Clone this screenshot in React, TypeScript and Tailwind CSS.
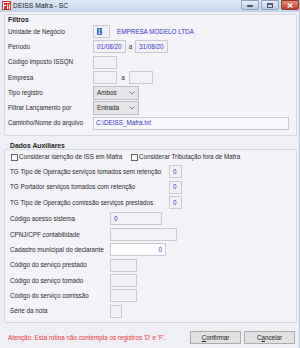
import React from "react";

const font = { fontFamily: '"Liberation Sans", Arial, sans-serif' };

const Box = ({ w, children, white, right }: { w: string; children?: React.ReactNode; white?: boolean; right?: boolean }) => (
  <div
    className={`${w} h-[13px] border border-[#c9c9cf] ${white ? "bg-white" : "bg-[#f2f2f6]"} flex items-center px-[3px] text-[#3535c8] ${right ? "justify-end" : ""}`}
  >
    {children}
  </div>
);

const Select = ({ value }: { value: string }) => (
  <div className="w-[46px] h-[14px] border border-[#bdbdc2] bg-[#e6e6e9] flex items-center justify-between px-[3px] text-[#222]">
    <span>{value}</span>
    <svg width="6" height="4" viewBox="0 0 6 4">
      <path d="M0.5 0.5 L3 3 L5.5 0.5" fill="none" stroke="#666" strokeWidth="0.8" />
    </svg>
  </div>
);

const Check = () => <div className="w-[7px] h-[7px] border border-[#666] bg-white shrink-0" />;

export default function App() {
  return (
    <div
      className="w-[300px] h-[348px] overflow-hidden bg-[#eef0f5] flex flex-col text-[6.3px] leading-[8px] text-[#2a2a2a] border-r border-[#b9c7da]"
      style={font}
    >
      {/* title bar */}
      <div className="h-[12px] flex items-center bg-gradient-to-b from-[#dde8f5] to-[#c7d8ee] border-b border-[#c5d2e2]">
        <svg width="9" height="9" viewBox="0 0 9 9" className="ml-[2px]">
          <rect width="9" height="9" fill="#d8332b" />
          <path d="M1.5 1.5 H7.5 M1.5 1.5 V8 M1.5 4.5 H4 M5.5 3.5 V8 M7.5 3.5 V8" stroke="#fff" strokeWidth="1.1" />
        </svg>
        <span className="ml-[2px] text-[6.8px] text-[#1b1b1b]">DEISS Mafra - SC</span>
        <div className="ml-auto flex items-start self-start gap-[2px]">
          <div className="w-[18px] h-[10px] rounded-b-[2px] border border-[#8ea2bf] bg-gradient-to-b from-[#e6eef8] to-[#bccde3] flex items-center justify-center">
            <div className="w-[6px] h-[2px] bg-[#4a5a70] mt-[2px]" />
          </div>
          <div className="w-[18px] h-[10px] rounded-b-[2px] border border-[#8ea2bf] bg-gradient-to-b from-[#e6eef8] to-[#bccde3] flex items-center justify-center">
            <div className="w-[6px] h-[5px] border border-[#4a5a70] border-t-2" />
          </div>
          <div className="w-[18px] h-[10px] rounded-b-[2px] border border-[#8a3a30] bg-gradient-to-b from-[#e58b7c] to-[#c63b27] flex items-center justify-center">
            <svg width="6" height="5" viewBox="0 0 6 5">
              <path d="M0.7 0.5 L5.3 4.5 M5.3 0.5 L0.7 4.5" stroke="#fff" strokeWidth="1.3" />
            </svg>
          </div>
        </div>
      </div>

      <div className="px-[4px] flex flex-col">
        {/* Filtros */}
        <div className="mt-[2px] h-[122px] w-[293px] border border-[#d8d9e0] rounded-[2px] bg-[#f3f3f8] pl-[3px] flex flex-col">
          <div className="h-[9px] flex items-center font-bold text-[6.8px] text-[#1e1e1e]">Filtros</div>
          <div className="h-[15px] flex items-center">
            <div className="w-[85px]">Unidade de Negócio</div>
            <Box w="w-[17px]">
              <span className="bg-[#2f6fd6] text-white px-[0.5px] leading-[7px]">1</span>
            </Box>
            <span className="ml-[7px] text-[#3535c8]">EMPRESA MODELO LTDA</span>
          </div>
          <div className="h-[15px] flex items-center">
            <div className="w-[85px]">Período</div>
            <Box w="w-[33px]">01/08/20</Box>
            <span className="w-[9px] text-center">a</span>
            <Box w="w-[33px]">31/08/20</Box>
          </div>
          <div className="h-[16px] flex items-center">
            <div className="w-[85px]">Código imposto ISSQN</div>
            <Box w="w-[24px]" />
          </div>
          <div className="h-[15px] flex items-center">
            <div className="w-[85px]">Empresa</div>
            <Box w="w-[24px]" />
            <span className="w-[12px] text-center">a</span>
            <Box w="w-[24px]" />
          </div>
          <div className="h-[15px] flex items-center">
            <div className="w-[85px]">Tipo registro</div>
            <Select value="Ambos" />
          </div>
          <div className="h-[15px] flex items-center">
            <div className="w-[85px]">Filtrar Lançamento por</div>
            <Select value="Entrada" />
          </div>
          <div className="h-[16px] flex items-center">
            <div className="w-[85px]">Caminho/Nome do arquivo</div>
            <div className="w-[196px] h-[13px] border border-[#c9c9cf] bg-[#f7f7fb] flex items-center px-[2px] text-[#3535c8]">
              C:\DEISS_Mafra.txt
            </div>
          </div>
        </div>

        {/* Dados Auxiliares */}
        <div className="h-[13px] pt-[6px] pl-[6px] font-bold text-[6.8px] text-[#1e1e1e]">Dados Auxiliares</div>
        <div className="h-[174px] w-[293px] border border-[#d8d9e0] rounded-[2px] bg-[#f3f3f8] pl-[5px] flex flex-col">
          <div className="h-[14px] flex items-center">
            <div className="w-[121px] flex items-center gap-[1px] pl-[1px]">
              <Check />
              <span>Considerar isenção de ISS em Mafra</span>
            </div>
            <div className="flex items-center gap-[1px]">
              <Check />
              <span>Considerar Tributação fora de Mafra</span>
            </div>
          </div>
          <div className="h-[15px] flex items-center">
            <div className="w-[159px]">TG Tipo de Operação serviços tomados sem retenção</div>
            <Box w="w-[13px]">0</Box>
          </div>
          <div className="h-[16px] flex items-center">
            <div className="w-[159px]">TG Portador serviços tomados com retenção</div>
            <Box w="w-[13px]">0</Box>
          </div>
          <div className="h-[15px] flex items-center">
            <div className="w-[159px]">TG Tipo de Operação comissão serviços prestados</div>
            <Box w="w-[13px]">0</Box>
          </div>
          <div className="h-[17px] flex items-center">
            <div className="w-[100px]">Código acesso sistema</div>
            <Box w="w-[52px]">0</Box>
          </div>
          <div className="h-[15px] flex items-center">
            <div className="w-[100px]">CPNJ/CPF contabilidade</div>
            <Box w="w-[67px]" />
          </div>
          <div className="h-[15px] flex items-center">
            <div className="w-[100px]">Cadastro municipal do declarante</div>
            <Box w="w-[56px]" white right>0</Box>
          </div>
          <div className="h-[16px] flex items-center">
            <div className="w-[100px]">Código do serviço prestado</div>
            <Box w="w-[27px]" />
          </div>
          <div className="h-[15px] flex items-center">
            <div className="w-[100px]">Código do serviço tomado</div>
            <Box w="w-[27px]" />
          </div>
          <div className="h-[15px] flex items-center">
            <div className="w-[100px]">Código do serviço comissão</div>
            <Box w="w-[27px]" />
          </div>
          <div className="h-[16px] flex items-center">
            <div className="w-[100px]">Série da nota</div>
            <Box w="w-[12px]" />
          </div>
        </div>

        {/* footer */}
        <div className="mt-[7px] h-[15px] flex items-center pl-[4px]">
          <span className="text-[#f0303a]">Atenção: Esta rotina não contempla os registros 'D' e 'F'.</span>
          <div className="ml-auto flex gap-[3px]">
            <button className="w-[51px] h-[13px] border border-[#adadad] bg-[#e1e1e1] text-[#222] flex items-center justify-center">
              <span><u>C</u>onfirmar</span>
            </button>
            <button className="w-[51px] h-[13px] border border-[#adadad] bg-[#e1e1e1] text-[#222] flex items-center justify-center">
              <span>C<u>a</u>ncelar</span>
            </button>
          </div>
        </div>
      </div>
    </div>
  );
}
